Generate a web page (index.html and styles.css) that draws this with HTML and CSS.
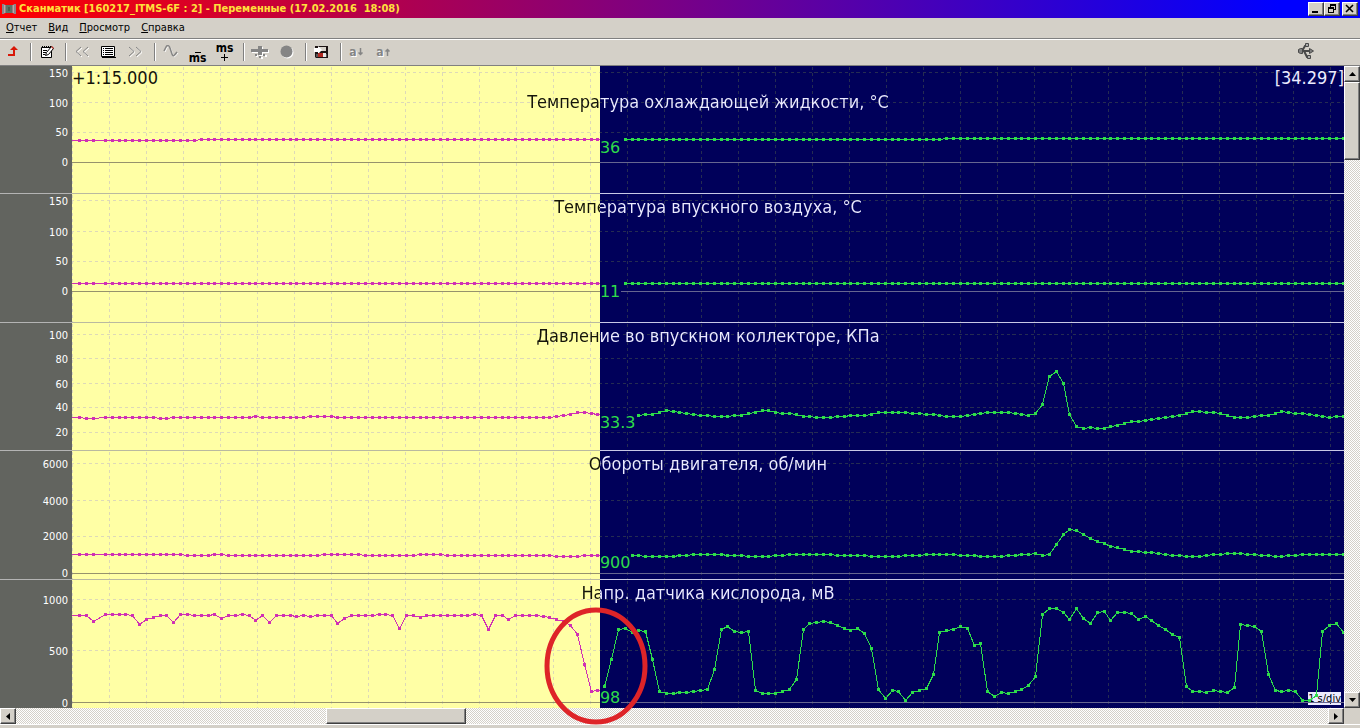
FILE: index.html
```html
<!DOCTYPE html>
<html lang="ru">
<head>
<meta charset="utf-8">
<title>Сканматик - Переменные</title>
<link rel="stylesheet" href="styles.css">
</head>
<body>
<div class="window">
  <header class="titlebar">
    <svg class="app-icon" width="14" height="14" viewBox="0 0 14 14" aria-hidden="true"><path fill="#8c8488" d="M0 2h2l1 1h8l1-1h2v10h-2l-1-1H3l-1 1H0z"/><path fill="#5c7468" d="M4 3h6v8H4z"/><path fill="#b8a8a8" d="M2 3h1v8H2zM11 3h1v8h-1z"/><path fill="#4a5c50" d="M6 5h2v4H6z"/></svg>
    <h1 class="title">Сканматик [160217_ITMS-6F : 2] - Переменные (17.02.2016&nbsp; 18:08)</h1>
    <div class="win-buttons">
      <button class="win-btn" type="button" aria-label="Свернуть"><svg width="12" height="10" viewBox="0 0 12 10"><path d="M2 7h6v2H2z"/></svg></button>
      <button class="win-btn" type="button" aria-label="Восстановить"><svg width="12" height="10" viewBox="0 0 12 10"><path fill-rule="evenodd" d="M4 0h6v6H8v3H2V3h2zM5 2v1h3v2h1V2zM3 5v3h4V5z"/></svg></button>
      <button class="win-btn win-close" type="button" aria-label="Закрыть"><svg width="12" height="10" viewBox="0 0 12 10"><path fill="none" stroke="#000" stroke-width="1.600" d="M2 1l7 7M9 1L2 8"/></svg></button>
    </div>
  </header>

  <nav class="menubar">
    <button class="menu" type="button"><u>О</u>тчет</button>
    <button class="menu" type="button"><u>В</u>ид</button>
    <button class="menu" type="button"><u>П</u>росмотр</button>
    <button class="menu" type="button"><u>С</u>правка</button>
  </nav>

  <div class="toolbar">
    <button class="tool tool-first" type="button" aria-label="Назад"><svg width="12" height="12" viewBox="0 0 12 12"><path fill="#d81808" d="M7 0l4 4H8v6H1V8h5V4H3z"/></svg></button>
    <span class="sep"></span>
    <button class="tool" type="button" aria-label="Заметка"><svg width="16" height="16" viewBox="0 0 16 16"><path fill="#fff" stroke="#000" d="M2.500 3.500h10v10h-10z"/><path fill="none" stroke="#000" stroke-dasharray="1 1" d="M3 2.500h9"/><path stroke="#000" d="M4 6.500h4M4 8.500h3M4 10.500h2"/><path fill="#fff" stroke="#000" d="M6.500 11.500l1-3 5-6 2 2-5 6z"/><path fill="#b03028" d="M12 3l1-1 2 2-1 1z"/></svg></button>
    <span class="sep"></span>
    <button class="tool" type="button" disabled aria-label="Предыдущий"><svg width="16" height="12" viewBox="0 0 16 12"><path class="emboss" d="M8 2L3 6.500 8 11M15 2l-5 4.500 5 4.500"/><path class="dim" d="M7 1L2 5.500 7 10M14 1L9 5.500 14 10"/></svg></button>
    <button class="tool" type="button" aria-label="Список"><svg width="15" height="12" viewBox="0 0 15 12"><path fill="#fff" stroke="#000" d="M.5.5h13v10H.5z"/><path stroke="#000" d="M2 2.500h1M4 2.500h8M2 4.500h1M4 4.500h8M2 6.500h1M4 6.500h8M2 8.500h1M4 8.500h8M1 11.500h14"/></svg></button>
    <button class="tool" type="button" disabled aria-label="Следующий"><svg width="16" height="12" viewBox="0 0 16 12"><path class="emboss" d="M2 2l5 4.500L2 11M9 2l5 4.500L9 11"/><path class="dim" d="M1 1l5 4.500L1 10M8 1l5 4.500L8 10"/></svg></button>
    <span class="sep"></span>
    <button class="tool" type="button" disabled aria-label="График"><svg width="16" height="14" viewBox="0 0 16 14"><path class="emboss" d="M2 7l2-4c1-2 3-2 4 1l2 6c1 3 2 2 5-2"/><path class="dim wave" d="M1 6l2-4c1-2 3-2 4 1l2 6c1 3 2 2 5-2"/></svg></button>
    <button class="tool tool-ms tool-ms-low" type="button"><span class="minus"></span><b>ms</b></button>
    <button class="tool tool-ms" type="button"><b>ms</b><svg width="8" height="8" viewBox="0 0 8 8"><path stroke="#000" d="M0 4.500h7M3.500 1v7"/></svg></button>
    <span class="sep"></span>
    <button class="tool" type="button" disabled aria-label="Маркер"><svg width="18" height="14" viewBox="0 0 18 14"><path fill="#fff" d="M8 2h4v3h6v3h-6v3H8V8H1V5h7zM5 10h2v2H5zM10 12h2v2h-2zM14 10h2v2h-2z"/><path fill="#858585" d="M7 1h4v3h6v3h-6v3H7V7H0V4h7zM4 9h2v2H4zM8 11h2v2H8zM12 9h2v2h-2z"/></svg></button>
    <button class="tool" type="button" disabled aria-label="Запись"><svg width="14" height="14" viewBox="0 0 14 14"><circle cx="7.500" cy="7.500" r="6" fill="#fff"/><circle cx="6.500" cy="6.500" r="6" fill="#858585"/></svg></button>
    <span class="sep"></span>
    <button class="tool" type="button" aria-label="Сохранить"><svg width="15" height="14" viewBox="0 0 15 14"><path fill="#1c1414" d="M1 1h13v12H2l-1-1z"/><path fill="#d8d4cc" d="M4 2h8v4H4z"/><path fill="#fff" d="M0 3h4V1l4 4-4 4V7H0z"/><path fill="#555" d="M2 9h11v3H2z"/><path fill="#b02820" d="M4 8h5v4H4z"/><path fill="#e8e8e8" d="M9 8h3v4H9z"/></svg></button>
    <span class="sep"></span>
    <button class="tool tool-font" type="button" disabled>a<svg width="6" height="8" viewBox="0 0 6 8"><path class="dim wave" d="M2.500 0v7M.5 4.500l2 2 2-2"/></svg></button>
    <button class="tool tool-font" type="button" disabled>a<svg width="6" height="8" viewBox="0 0 6 8"><path class="dim wave" d="M2.500 8V1M.5 3.500l2-2 2 2"/></svg></button>
    <svg class="usb" width="18" height="17" viewBox="0 0 18 17" aria-label="USB"><path fill="none" stroke="#484848" stroke-width="2" d="M5 8h9M5 8l3-5h2M7 8l3 6h1"/><path fill="#808080" stroke="#484848" d="M1.500 6.500l2-1h2v5h-2l-2-1zM12.500 5.500l4 2.500-4 2.500z"/><path fill="#aaa" stroke="#484848" d="M8.500.5h3v3h-3zM10.500 12.500h3v3h-3z"/></svg>
  </div>

  <main class="workspace">
    <div class="channels" id="channels">
      <svg class="shared-defs" aria-hidden="true">
        <defs>
          <linearGradient id="paintGrid" gradientUnits="userSpaceOnUse" x1="0" x2="1272" y1="0" y2="0"><stop offset=".415" stop-color="#ddd9b8"/><stop offset=".415" stop-color="#252c52"/></linearGradient>
          <linearGradient id="paintZero" gradientUnits="userSpaceOnUse" x1="0" x2="1272" y1="0" y2="0"><stop offset=".415" stop-color="#96926c"/><stop offset=".415" stop-color="#666690"/></linearGradient>
          <marker id="dotPast" markerWidth="3" markerHeight="3" refX="1.500" refY="1.500" markerUnits="userSpaceOnUse"><path fill="#d030b4" d="M0 0h3v3H0z"/></marker>
          <marker id="dotNow" markerWidth="3" markerHeight="3" refX="1.500" refY="1.500" markerUnits="userSpaceOnUse"><path fill="#2edc4a" d="M0 0h3v3H0z"/></marker>
        </defs>
      </svg>
      <section class="channel"><div class="axis"></div><div class="plot"><svg class="trace" preserveAspectRatio="none"></svg><h2 class="name name-low">Температура охлаждающей жидкости, °C</h2><output class="value">36</output><span class="clock clock-left">+1:15.000</span><span class="clock clock-right">[34.297]</span></div></section>
      <section class="channel"><div class="axis"></div><div class="plot"><svg class="trace" preserveAspectRatio="none"></svg><h2 class="name">Температура впускного воздуха, °C</h2><output class="value">11</output></div></section>
      <section class="channel"><div class="axis"></div><div class="plot"><svg class="trace" preserveAspectRatio="none"></svg><h2 class="name">Давление во впускном коллекторе, КПа</h2><output class="value">33.3</output></div></section>
      <section class="channel"><div class="axis"></div><div class="plot"><svg class="trace" preserveAspectRatio="none"></svg><h2 class="name">Обороты двигателя, об/мин</h2><output class="value">900</output></div></section>
      <section class="channel"><div class="axis"></div><div class="plot"><span class="timebase">1 s/div</span><svg class="trace" preserveAspectRatio="none"></svg><h2 class="name">Напр. датчика кислорода, мВ</h2><output class="value">98</output></div></section>
    </div>
    <div class="vscroll">
      <button class="scroll-btn" type="button" aria-label="Вверх"><svg width="7" height="4" viewBox="0 0 7 4"><path d="M0 4h7L3.500 0z"/></svg></button>
      <div class="vthumb"></div>
      <button class="scroll-btn scroll-end" type="button" aria-label="Вниз"><svg width="7" height="4" viewBox="0 0 7 4"><path d="M0 0h7L3.500 4z"/></svg></button>
    </div>
  </main>

  <div class="hscroll">
    <button class="scroll-btn" type="button" aria-label="Влево"><svg width="4" height="7" viewBox="0 0 4 7"><path d="M4 0v7L0 3.500z"/></svg></button>
    <div class="htrack"><div class="hthumb"></div></div>
    <button class="scroll-btn" type="button" aria-label="Вправо"><svg width="4" height="7" viewBox="0 0 4 7"><path d="M0 0v7l4-3.500z"/></svg></button>
  </div>
  <div class="statusbar"></div>

  <svg class="callout" viewBox="0 0 104 118" aria-hidden="true"><ellipse cx="52" cy="59" rx="49" ry="56" fill="none" stroke="#de2428" stroke-width="5"/></svg>
</div>
<script src="chart.js"></script>
</body>
</html>
```
FILE: styles.css
```css
* { box-sizing: border-box; }

body {
  margin: 0;
  background: #d4d0c8;
  font: 11px "DejaVu Sans Condensed", "DejaVu Sans", sans-serif;
  color: #000;
}

button {
  margin: 0;
  padding: 0;
  border: 0;
  background: none;
  font: inherit;
  color: inherit;
}

.window {
  position: relative;
  display: flex;
  flex-direction: column;
  height: 100vh;
  overflow: hidden;
}

.titlebar {
  display: flex;
  align-items: center;
  gap: 3px;
  height: 18px;
  padding: 0 2px;
  background: linear-gradient(to right, #ff0000, #0000ff 94%);
}

.title {
  flex: 1;
  margin: 0;
  font-size: 11px;
  font-weight: bold;
  line-height: 18px;
  color: #ffe03c;
  white-space: nowrap;
}

.win-buttons { display: flex; }

.win-btn,
.scroll-btn,
.vthumb,
.hthumb {
  background: #d4d0c8;
  border: 1px solid;
  border-color: #fff #404040 #404040 #fff;
  box-shadow: inset -1px -1px #808080;
}

.win-btn {
  display: grid;
  place-items: center;
  width: 16px;
  height: 14px;
}

.win-close { margin-left: 2px; }

.menubar {
  display: flex;
  gap: 11px;
  height: 21px;
  padding: 0 6px;
  border-bottom: 1px solid #808080;
}

.menu { line-height: 20px; }

.toolbar {
  display: flex;
  align-items: center;
  height: 27px;
  padding-bottom: 2px;
  border-top: 1px solid #fff;
  border-bottom: 1px solid #808080;
}

.tool {
  display: flex;
  align-items: center;
  justify-content: center;
  width: 27px;
  height: 22px;
}

.tool-first { width: 25px; }

.sep {
  width: 2px;
  height: 18px;
  margin: 0 1px 0 5px;
  border-left: 1px solid #808080;
  border-right: 1px solid #fff;
}

.tool-ms {
  flex-direction: column;
  font-size: 12px;
  line-height: 10px;
}

.tool-ms-low { justify-content: flex-end; }

.minus {
  width: 6px;
  height: 1px;
  background: #000;
}

.tool-font {
  gap: 1px;
  font-size: 12px;
  font-weight: bold;
  color: #858585;
  text-shadow: 1px 1px #fff;
}

.dim { fill: none; stroke: #858585; }
.emboss { fill: none; stroke: #fff; }
.wave { stroke-width: 1.5; }

.usb { margin-left: auto; margin-right: 45px; }

.workspace {
  display: flex;
  flex: 1;
  min-height: 0;
}

.channels {
  display: grid;
  flex: 1;
  grid-template-rows: 128fr 129fr 128fr 129fr 128fr;
}

.shared-defs { position: absolute; width: 0; height: 0; }

.channel { display: flex; min-height: 0; }

.axis {
  position: relative;
  width: 72px;
  background: #62645f;
  border-bottom: 1px solid #b4b4b4;
}

.tick {
  position: absolute;
  right: 4px;
  line-height: 12px;
  margin-top: -6px;
  color: #fff;
}

.plot {
  position: relative;
  flex: 1;
  background: linear-gradient(to right, #ffffa5 41.5%, #00005a 41.5%);
}

.plot::after {
  content: "";
  position: absolute;
  inset: auto 0 0 0;
  height: 1px;
  background: linear-gradient(to right, #b9b9a0 41.5%, #c8c8e6 41.5%);
}

.channel:last-child .axis { border-bottom: 0; }
.channel:last-child .plot::after { display: none; }

.trace {
  position: absolute;
  inset: 0;
  width: 100%;
  height: 100%;
  shape-rendering: crispEdges;
}

.grid { fill: none; stroke: url(#paintGrid); stroke-dasharray: 3 3; }
.zero { fill: none; stroke: url(#paintZero); }
.past { fill: none; stroke: #d030b4; marker-start: url(#dotPast); marker-mid: url(#dotPast); }
.now { fill: none; stroke: #2edc4a; marker: url(#dotNow); }

.name {
  position: relative;
  margin: 0;
  font-size: 18px;
  font-weight: normal;
  line-height: 26px;
  text-align: center;
  color: transparent;
  background: linear-gradient(to right, #14140a 41.5%, #ebebff 41.5%);
  -webkit-background-clip: text;
  background-clip: text;
}

.name-low { padding-top: 23px; }

.value {
  position: absolute;
  left: 41.5%;
  margin-top: -9px;
  padding-right: 1px;
  background: #00005a;
  font: 16px "DejaVu Sans", sans-serif;
  line-height: 16px;
  color: #2edc4a;
}

.clock {
  position: absolute;
  top: 0;
  font-size: 18px;
  line-height: 24px;
}

.clock-left { left: 0; color: #14140a; }
.clock-right { right: 0; color: #ebebff; }

.timebase {
  position: absolute;
  right: 3px;
  bottom: 3px;
  background: #ebebff;
  line-height: 13px;
}

.vscroll,
.htrack {
  background: repeating-conic-gradient(#fff 0 25%, #d4d0c8 0 50%) 0 0 / 2px 2px;
}

.vscroll {
  display: flex;
  flex-direction: column;
  width: 16px;
}

.vthumb { height: 78px; }

.scroll-btn {
  display: grid;
  place-items: center;
  width: 16px;
  height: 16px;
}

.scroll-end { margin-top: auto; }

.hscroll {
  display: flex;
  height: 16px;
  padding-right: 16px;
}

.htrack { flex: 1; }

.hthumb {
  width: 140px;
  height: 16px;
  margin-left: 310px;
}

.statusbar {
  height: 4px;
  border-top: 1px solid #fff;
}

.callout {
  position: absolute;
  left: 544px;
  top: 607px;
  width: 104px;
  height: 118px;
}
```
FILE: chart.js
```js
// Plot space: 1272 units wide, one unit per pixel; the cursor splits it at 528.
const WIDTH = 1272, CURSOR = 528, DIV = 37;
const FIRST = 33.4, STEP = 6.84;

// "n*y" repeats a sample n times.
function expand(text) {
  return text.trim().split(/\s+/).flatMap(t => {
    const [a, b] = t.split("*");
    return b === undefined ? [Number(a)] : Array(Number(a)).fill(Number(b));
  });
}

const channels = [
  { top: 66, height: 128, zero: 162, valueY: 148,
    ticks: [[150, 72], [100, 102], [50, 132], [0, 162]],
    lead: "140 140 140", past: "14*140 59*139", from: 76, now: "47*139 59*138" },
  { top: 194, height: 129, zero: 291, valueY: 292,
    ticks: [[150, 200], [100, 231], [50, 261], [0, 291]],
    lead: "283 283 283", past: "73*283", from: 76, now: "106*283" },
  { top: 323, height: 128, valueY: 423,
    ticks: [[100, 334], [80, 358], [60, 383], [40, 407], [20, 432]],
    lead: "417 418 418",
    past: "8*417 2*418 12*417 416 7*417 4*416 32*417 416 415 414 412 412 413 414",
    from: 78,
    now: `415 414 414 412 410 411 412 413 414 415 415 416 416 416 415 415 413 412 410 410
      412 413 413 414 416 416 417 417 417 416 416 415 415 415 414 412 412 412 412 412
      413 413 414 414 415 416 416 416 415 414 413 4*412 413 414 415 413 404 376 371 383
      414 426 428 427 428 428 426 425 423 421 421 420 419 418 417 416 415 413 411 411
      412 412 413 415 417 417 417 416 415 415 413 411 412 413 413 414 415 416 417 416 416` },
  { top: 451, height: 129, zero: 573, valueY: 563,
    ticks: [[6000, 463], [4000, 500], [2000, 536], [0, 573]],
    lead: "554 554 554",
    past: "12*554 4*555 2*554 14*555 6*554 8*555 4*554 16*555 4*556 3*555", from: 77,
    now: `555 555 5*556 2*555 5*554 3*555 4*556 2*555 7*554 5*555 5*556 3*555 5*554
      3*555 4*556 555 555 554 554 553 555 554 544 534 529 530 534 538 541 543 546 547
      549 551 551 552 552 553 554 555 555 556 556 556 555 554 554 553 553 553 554 554
      555 555 556 556 555 555 7*554` },
  { top: 580, height: 128, zero: 702, valueY: 698,
    ticks: [[1000, 599], [500, 650], [0, 702]],
    lead: "615 615 621",
    past: `614 614 614 614 615 624 619 617 615 615 622 614 614 615 615 615 614 618 615 615
      614 615 620 615 622 615 615 615 616 615 616 615 615 615 623 618 4*615 614 614 615
      628 615 615 617 7*615 614 615 629 615 615 619 4*615 616 617 619 621 625 634 664 691 690`,
    from: 73,
    now: `686 659 629 628 632 630 631 659 691 693 693 692 692 691 690 689 669 629 626 631
      632 631 690 693 693 693 691 689 679 629 623 622 621 622 625 628 630 628 633 648
      689 698 690 691 700 692 690 688 674 632 630 629 626 628 645 643 691 696 692 693
      691 689 685 676 614 608 608 612 619 608 618 623 612 611 620 612 612 613 619 616
      620 625 629 634 637 686 691 691 692 690 691 692 687 624 625 626 631 674 690 691
      690 691 700 700 695 631 625 623 632` }
];

const sampleX = i => Math.floor(FIRST + STEP * i);

document.querySelectorAll(".channel").forEach((row, n) => {
  const c = channels[n];
  const svg = row.querySelector(".trace");
  // Shifted by half a unit so that whole coordinates fall on pixel centres.
  svg.setAttribute("viewBox", `-0.5 -0.5 ${WIDTH} ${c.height}`);

  let grid = "", zero = "";
  for (let x = 0; x < WIDTH; x += DIV) grid += `M${x} 0V${c.height}`;
  for (const [, y] of c.ticks) {
    if (y !== c.zero) grid += `M-2 ${y - c.top}H${WIDTH}`;
  }
  if (c.zero) zero = `M-1 ${c.zero - c.top}H${WIDTH}`;

  const point = (x, y) => `${x},${y - c.top}`;
  const lead = expand(c.lead), past = expand(c.past), now = expand(c.now);
  const before = [
    ...lead.map((y, i) => point(7 * (i + 1), y)),
    ...past.map((y, i) => point(sampleX(i), y)),
    point(CURSOR - 1, past[past.length - 1])
  ];
  const after = now.map((y, i) => point(sampleX(c.from + i), y));

  svg.innerHTML =
    `<path class="grid" d="${grid}"/><path class="zero" d="${zero}"/>` +
    `<path class="past" style="marker:none" d="M-1 ${lead[0] - c.top}H7"/>` +
    `<polyline class="past" points="${before.join(" ")}"/>` +
    `<polyline class="now" points="${after.join(" ")}"/>`;

  const percent = y => ((y + 1 - c.top) / c.height * 100).toFixed(2) + "%";
  row.querySelector(".axis").innerHTML = c.ticks
    .map(([v, y]) => `<span class="tick" style="top:${percent(y + 1)}">${v}</span>`).join("");
  row.querySelector(".value").style.top = percent(c.valueY);
});
```
